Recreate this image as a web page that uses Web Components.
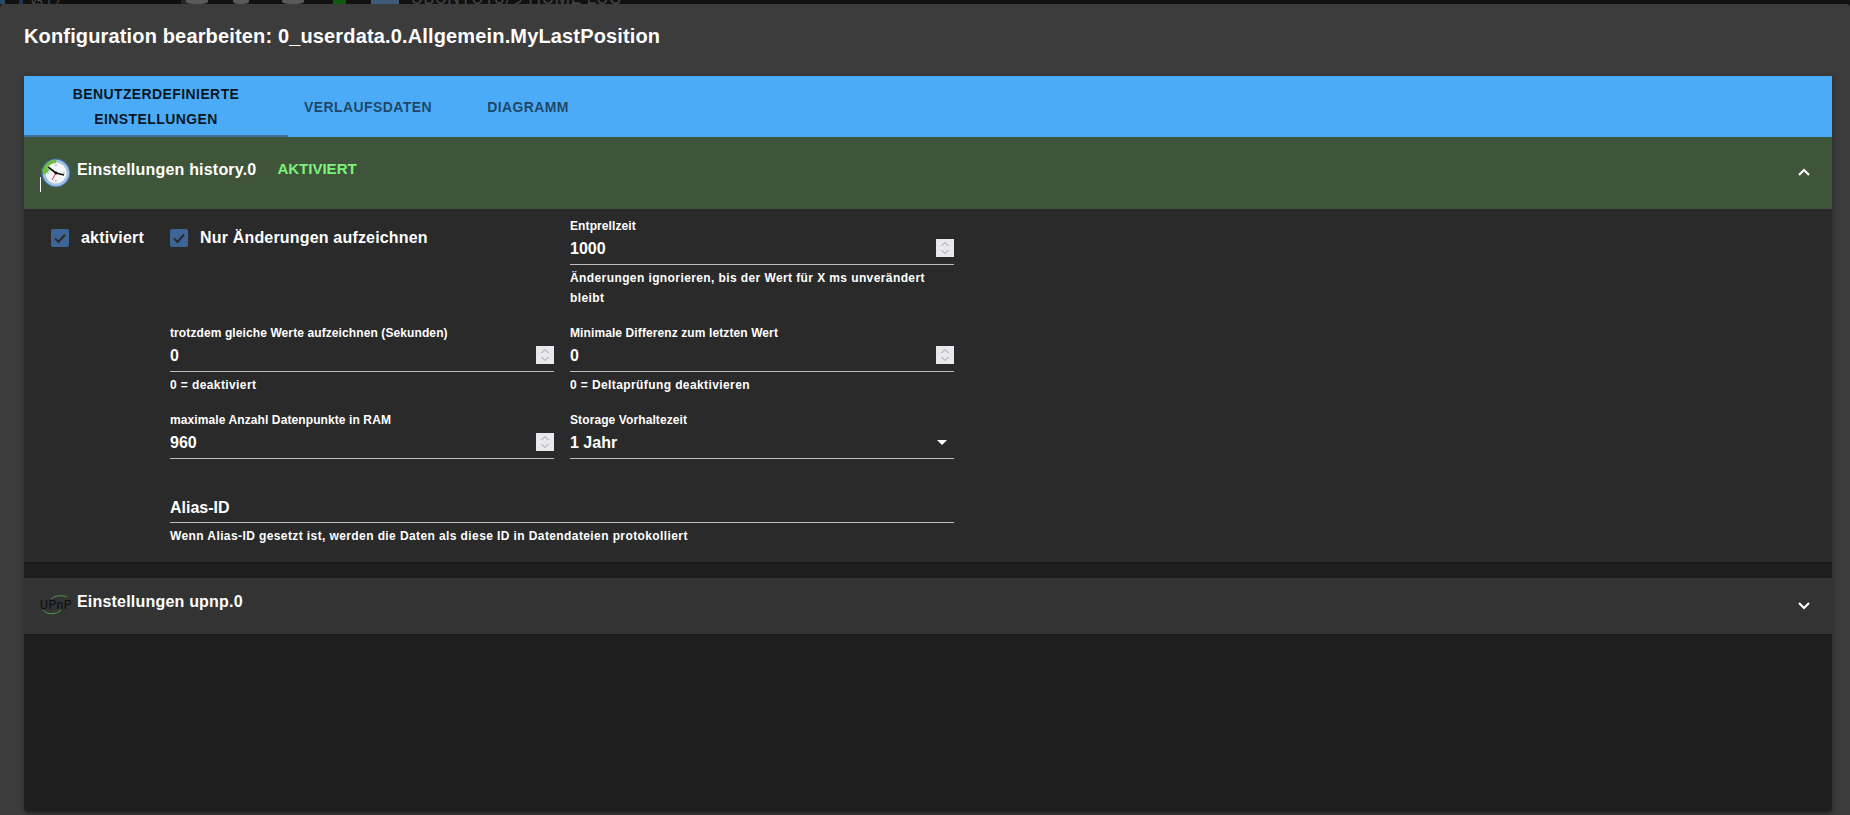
<!DOCTYPE html>
<html lang="de"><head><meta charset="utf-8"><title>Konfiguration</title>
<style>
html,body{margin:0;height:100%;background:#111;overflow:hidden;font-family:"Liberation Sans",Roboto,sans-serif;color:#fff}
</style></head><body>
<backdrop-strip></backdrop-strip>
<config-dialog heading="Konfiguration bearbeiten: 0_userdata.0.Allgemein.MyLastPosition">
  <tab-bar></tab-bar>
  <acc-panel open title-text="Einstellungen history.0" status="AKTIVIERT" icon="clock">
    <form-grid></form-grid>
  </acc-panel>
  <acc-panel title-text="Einstellungen upnp.0" icon="upnp"></acc-panel>
</config-dialog>
<script>
function el(name, html, css){
  customElements.define(name, class extends HTMLElement{
    connectedCallback(){
      if(this.shadowRoot) return;
      const r=this.attachShadow({mode:'open'});
      r.innerHTML='<style>'+css+'</style>'+(typeof html==='function'?html(this):html);
    }
  });
}
el('backdrop-strip',`
  <i style="width:5px;background:#2a4a66;margin-right:14px"></i>
  <i style="width:4px;background:#1c3650;margin-right:10px;margin-left:0"></i>
  <span class="v">v5.1.7</span>
  <i style="width:118px;background:#0d0d0d;margin-left:30px"></i>
  <i style="width:8px;background:#252525"></i>
  <b style="left:186px;width:22px"></b><b style="left:233px;width:16px"></b><b style="left:282px;width:22px"></b>
  <i class="abs" style="left:333px;width:13px;background:#0c5a0c"></i>
  <i class="abs" style="left:371px;width:28px;background:#3d5a78"></i>
  <span class="t">UBUNTU18/9 HOME LOG</span>`,
`:host{display:flex;height:4px;overflow:hidden;align-items:flex-end;position:relative;background:#111}
i{display:block;height:4px}
.abs,b{position:absolute;top:0;height:4px}
b{background:#5a5a5a;border-radius:0 0 50% 50%}
.v{font:11px Roboto,sans-serif;color:#555;position:absolute;left:31px;top:-5px;line-height:14px}
.t{position:absolute;left:411px;top:-11px;font:18px/18px Roboto,sans-serif;letter-spacing:.5px;color:#444;white-space:nowrap}`);

el('config-dialog',h=>`<h2>${h.getAttribute('heading')}</h2><div class="paper"><slot></slot></div>`,
`:host{display:flex;flex-direction:column;height:811px;box-sizing:border-box;background:#3c3c3c;border-radius:4px 4px 0 0;padding:0 18px 3px 24px}
h2{margin:0;height:72px;line-height:65px;font-size:20px;font-weight:700;letter-spacing:.15px;white-space:nowrap;flex:none}
.paper{flex:1;background:#1f1f1f;border-radius:0 0 4px 4px;box-shadow:0 2px 4px rgba(0,0,0,.25),2px 0 6px rgba(0,0,0,.12);overflow:hidden}`);

el('tab-bar',`<div class="tab on">Benutzerdefinierte Einstellungen</div><div class="tab">Verlaufsdaten</div><div class="tab">Diagramm</div>`,
`:host{display:flex;height:61px;background:#4babf7}
.tab{box-sizing:border-box;width:160px;height:61px;display:flex;align-items:center;justify-content:center;text-align:center;font-size:14px;font-weight:700;letter-spacing:.4px;text-transform:uppercase;color:rgba(0,0,0,.6);line-height:25px;padding:2px 12px 0}
.tab.on{width:264px;color:rgba(0,0,0,.88);border-bottom:2px solid #44709f;padding:2px 40px 0}`);

const icons={
clock:`<svg width="30" height="30" viewBox="0 0 30 30"><circle cx="15" cy="15" r="14.5" fill="#3f6f9f"/><circle cx="15" cy="15" r="13.2" fill="#a3c2e0"/><circle cx="15" cy="15" r="10.5" fill="#f4f6f8"/>
<path d="M15 6v2M15 22v2M6 15h2M22 15h2" stroke="#8fa6bc" stroke-width="1"/>
<path d="M15 15L7 9M15 15L23 17" stroke="#111" stroke-width="1.6" fill="none"/><path d="M15 15L11 22" stroke="#d33" stroke-width="1"/><circle cx="15" cy="15" r="1.500" fill="#111"/>
<path d="M2 12C4 5 9 1.500 15 1.500L15 5C10 5 7.500 8 6.500 11L9 12L3 17L0 10Z" fill="#6cbf3f"/></svg>`,
upnp:`<svg width="34" height="20" viewBox="0 0 34 20"><text x="0" y="14" font-family="Roboto,sans-serif" font-size="12" letter-spacing=".6" fill="#0c0c0c">UPnP</text>
<path d="M11 4C15 0 23 0 27 2" stroke="#4c9a4c" fill="none"/><path d="M3 15C7 20 16 20 21 15" stroke="#4c9a4c" fill="none"/></svg>`};
el('acc-panel',h=>{
 const o=h.hasAttribute('open'),c=h.getAttribute('icon');
 return `<div class="head ${o?'open':''}"><span class="ic ${c}">${icons[c]}</span>${o?'<span class="caret"></span>':''}<span class="tt">${h.getAttribute('title-text')}</span>${h.getAttribute('status')?`<span class="st">${h.getAttribute('status')}</span>`:''}
 <svg class="chev" width="12" height="8" viewBox="0 0 12 8"><path d="${o?'M1 7L6 2L11 7':'M1 1L6 6L11 1'}" fill="none" stroke="#fff" stroke-width="2"/></svg></div><div class="body"><slot></slot></div>`},
`:host{display:block}
.head{display:flex;align-items:flex-start;height:56px;background:#333;position:relative;box-shadow:0 1px 3px rgba(0,0,0,.3)}
.head.open{height:72px;background:#3f5539;box-shadow:none}
.ic{margin:19px 0 0 16px;width:37px;flex:none}
.ic.upnp{margin-top:17px}
.ic svg{display:block}
.open .ic{margin:21px 0 0 17px;width:36px}
.tt{font-size:16px;font-weight:700;letter-spacing:.2px;line-height:24px;margin-top:12px}
.open .tt{margin-top:21px}
.st{font-size:15px;font-weight:700;color:#7cf27c;line-height:24px;margin:20px 0 0 21px}
.chev{position:absolute;right:22px;top:24px}
.open .chev{top:31px}
.caret{position:absolute;left:16px;top:40px;width:1px;height:15px;background:#fff}
.body{display:none;background:#2a2a2a;box-shadow:0 1px 3px rgba(0,0,0,.3)}
.open+.body{display:block;margin-bottom:16px}`);

el('form-grid',`
 <check-box>aktiviert</check-box>
 <check-box>Nur Änderungen aufzeichnen</check-box>
 <text-field label="Entprellzeit" value="1000" kind="num" help="Änderungen ignorieren, bis der Wert für X ms unverändert bleibt"></text-field>
 <text-field class="c2" label="trotzdem gleiche Werte aufzeichnen (Sekunden)" value="0" kind="num" help="0 = deaktiviert"></text-field>
 <text-field label="Minimale Differenz zum letzten Wert" value="0" kind="num" help="0 = Deltaprüfung deaktivieren"></text-field>
 <text-field class="c2" label="maximale Anzahl Datenpunkte in RAM" value="960" kind="num"></text-field>
 <text-field label="Storage Vorhaltezeit" value="1 Jahr" kind="sel"></text-field>
 <text-field class="wide" value="Alias-ID" help="Wenn Alias-ID gesetzt ist, werden die Daten als diese ID in Datendateien protokolliert"></text-field>`,
`:host{display:grid;grid-template-columns:103px 384px 384px;column-gap:16px;row-gap:18px;padding:10px 0 16px 27px;align-items:start}
.c2{grid-column:2}
.wide{grid-column:2/4;margin-top:14px}`);

el('check-box',`<span class="b"><svg width="18" height="18" viewBox="0 0 18 18"><path d="M4 9.500L7.500 13L14 5.500" fill="none" stroke="#2a2a2a" stroke-width="2"/></svg></span><span class="l"><slot></slot></span>`,
`:host{display:flex;align-items:center;margin-top:10px;height:18px;white-space:nowrap}
.b{width:18px;height:18px;background:#3d6595;border-radius:2px;flex:none;display:block}
.b svg{display:block}
.l{margin-left:12px;font-size:16px;font-weight:700;letter-spacing:.18px}`);

el('text-field',h=>{
 const k=h.getAttribute('kind'),l=h.getAttribute('label'),hp=h.getAttribute('help');
 return `${l?`<label>${l}</label>`:''}<div class="in"><span class="val">${h.getAttribute('value')}</span>${k==='num'?`<span class="spin"><svg width="18" height="18" viewBox="0 0 18 18"><path d="M5.500 7L9 3.500L12.500 7M5.500 11L9 14.500L12.500 11" fill="none" stroke="#9a9aa2" stroke-width="1"/></svg></span>`:k==='sel'?`<span class="arr"></span>`:''}</div>${hp?`<p>${hp}</p>`:''}`},
`:host{display:block;min-width:0}
label{display:block;font-size:12px;font-weight:700;line-height:14px;letter-spacing:.1px;white-space:nowrap;color:#fff}
.in{height:31px;border-bottom:1px solid #bdbdbd;display:flex;align-items:center;justify-content:space-between;font-size:16px;font-weight:700;box-sizing:content-box}
:host(.wide) .val{padding-top:2px}
.spin{width:18px;height:18px;background:#e9e9ed;display:block;margin-top:-1px}
.spin svg{display:block}
.arr{width:0;height:0;border:5px solid transparent;border-top-color:#fff;border-bottom:0;margin-right:7px}
p{margin:3px 0 0;font-size:12px;font-weight:700;line-height:20px;letter-spacing:.4px}`);
</script>
</body></html>
